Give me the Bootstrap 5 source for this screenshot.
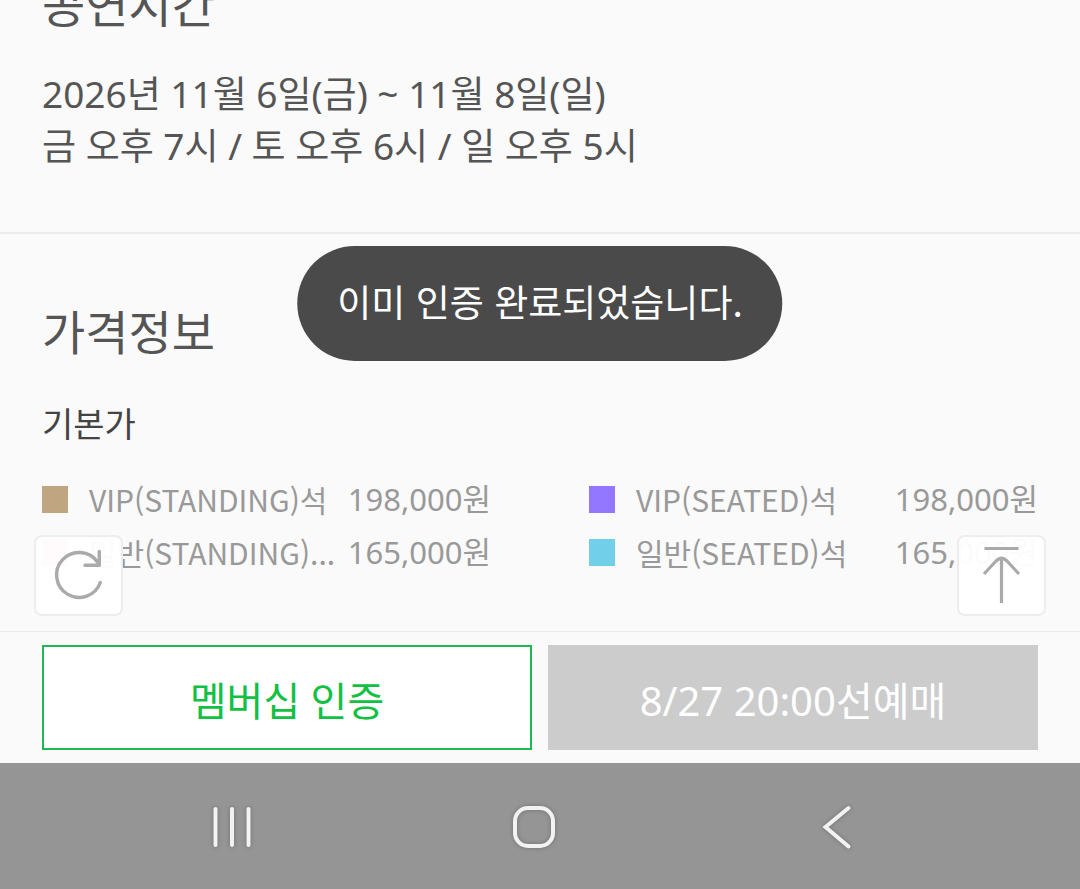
<!DOCTYPE html>
<html lang="ko">
<head>
<meta charset="utf-8">
<meta name="viewport" content="width=device-width, initial-scale=1">
<title>공연 예매</title>
<link rel="stylesheet" href="https://cdn.jsdelivr.net/npm/bootstrap@5.3.0/dist/css/bootstrap.min.css">
<style>
  body { background: #fafafa; color: #555; font-family: "Noto Sans", "Noto Sans CJK KR", sans-serif; }
  .scroll-area { min-height: 0; }
  .side-pad { padding-left: 42px; padding-right: 42px; }
  .info-title { font-size: 47px; line-height: 64px; font-weight: 400; font-family: "Noto Sans CJK KR", sans-serif; }
  .schedule { font-size: 37px; line-height: 52px; margin-top: 33px; padding-bottom: 60px; }
  .price-info { border-top: 2px solid #ececec; padding-top: 64px; padding-bottom: 52px; }
  .price-kind { font-size: 34px; line-height: 48px; font-weight: 400; color: #444; margin-top: 38px; }
  .price-grid { display: grid; grid-template-columns: 1fr 1fr; column-gap: 98px; margin-top: 25px; font-size: 31px; line-height: 53px; color: #999; white-space: nowrap; }
  .swatch { width: 26px; height: 27px; margin-right: 21px; }
  .seat-name { font-size: 30px; font-family: "Noto Sans CJK KR", sans-serif; }
  .sw-tan { background: #bfa580; } .sw-violet { background: #9377ff; }
  .sw-pink { background: #ff7f9a; } .sw-sky { background: #71cfe9; }
  .float-btn { bottom: 15px; width: 89px; height: 81px; padding: 0; background: rgba(255,255,255,.96); border: 2px solid #ededed; border-radius: 8px; }
  .float-left { left: 34px; } .float-right { right: 34px; }
  .toast-msg { top: 246px; background: #4a4a4a; color: #fff; font-size: 37px; line-height: 55px; padding: 28px 40px 32px; font-family: "Noto Sans CJK KR", sans-serif; white-space: nowrap; }
  .buy-bar { border-top: 1px solid #ebebeb; padding-top: 13px; padding-bottom: 13px; gap: 16px; }
  .buy-bar .btn { flex: 1 1 0; height: 105px; padding: 6px 0 0; border-radius: 0; border-width: 2px; font-size: 40px; line-height: 56px; }
  .btn-member, .btn-member:hover { background: #fff; border-color: #1eb852; color: #12c143; }
  .btn-presale, .btn-presale:disabled { background: #ccc; border-color: #ccc; color: #fff; opacity: 1; }
  .sys-nav { background: #959595; height: 126px; padding: 2px 92px 0 81px; }
  .sys-nav svg { filter: drop-shadow(0 0 2px rgba(0,0,0,.25)); }
</style>
</head>
<body class="vh-100 d-flex flex-column overflow-hidden">
<main class="scroll-area flex-grow-1 d-flex flex-column justify-content-end overflow-hidden position-relative">
  <section class="side-pad">
    <h2 class="info-title mb-0">공연시간</h2>
    <p class="schedule mb-0">2026년 11월 6일(금) ~ 11월 8일(일)<br>금 오후 7시 / 토 오후 6시 / 일 오후 5시</p>
  </section>
  <section class="side-pad price-info">
    <h2 class="info-title mb-0">가격정보</h2>
    <h3 class="price-kind mb-0">기본가</h3>
    <ul class="price-grid list-unstyled mb-0">
      <li class="d-flex align-items-center"><span class="swatch sw-tan flex-shrink-0"></span><span class="seat-name flex-grow-1">VIP(STANDING)석</span><span>198,000원</span></li>
      <li class="d-flex align-items-center"><span class="swatch sw-violet flex-shrink-0"></span><span class="seat-name flex-grow-1">VIP(SEATED)석</span><span>198,000원</span></li>
      <li class="d-flex align-items-center"><span class="swatch sw-pink flex-shrink-0"></span><span class="seat-name flex-grow-1">일반(STANDING)...</span><span>165,000원</span></li>
      <li class="d-flex align-items-center"><span class="swatch sw-sky flex-shrink-0"></span><span class="seat-name flex-grow-1">일반(SEATED)석</span><span>165,000원</span></li>
    </ul>
  </section>
  <button type="button" class="btn float-btn float-left position-absolute d-flex align-items-center justify-content-center" aria-label="새로고침">
    <svg width="85" height="77" viewBox="36 537 85 77" fill="none" stroke="#aaa" stroke-width="3.4" stroke-linecap="round" stroke-linejoin="round"><path d="M97.500 562A22.500 22.500 0 1 0 100.300 582.500M99.300 551.500V565.300H85"/></svg>
  </button>
  <button type="button" class="btn float-btn float-right position-absolute d-flex align-items-center justify-content-center" aria-label="맨 위로">
    <svg width="85" height="77" viewBox="959 537 85 77" fill="none" stroke="#aaa" stroke-width="3.2"><path d="M984.500 548.500H1018.500M1001.500 558V603M984 574L996 561Q1001.500 555.500 1007 561L1019 574"/></svg>
  </button>
</main>
<div class="buy-bar side-pad d-flex flex-shrink-0">
  <button type="button" class="btn btn-member">멤버십 인증</button>
  <button type="button" class="btn btn-presale" disabled>8/27 20:00선예매</button>
</div>
<nav class="sys-nav d-flex flex-shrink-0 align-items-center justify-content-between" aria-label="시스템 탐색">
  <button type="button" class="btn border-0 p-0 flex-fill" aria-label="최근 앱"><svg width="48" height="48" viewBox="0 0 48 48" stroke="#f2f2f2" stroke-width="4" stroke-linecap="round"><path d="M7.500 6V42M24 6V42M40.500 6V42"/></svg></button>
  <button type="button" class="btn border-0 p-0 flex-fill" aria-label="홈"><svg width="48" height="48" viewBox="0 0 48 48" fill="none" stroke="#f2f2f2" stroke-width="4"><rect x="5" y="5" width="38" height="38" rx="13"/></svg></button>
  <button type="button" class="btn border-0 p-0 flex-fill" aria-label="뒤로"><svg width="48" height="48" viewBox="0 0 48 48" fill="none" stroke="#f2f2f2" stroke-width="4" stroke-linecap="round"><path d="M35.500 5L12.500 24L35.500 43.500"/></svg></button>
</nav>
<div class="toast-msg position-absolute start-50 translate-middle-x rounded-pill" role="status">이미 인증 완료되었습니다.</div>
<script src="https://cdn.jsdelivr.net/npm/bootstrap@5.3.0/dist/js/bootstrap.bundle.min.js"></script>
</body>
</html>
